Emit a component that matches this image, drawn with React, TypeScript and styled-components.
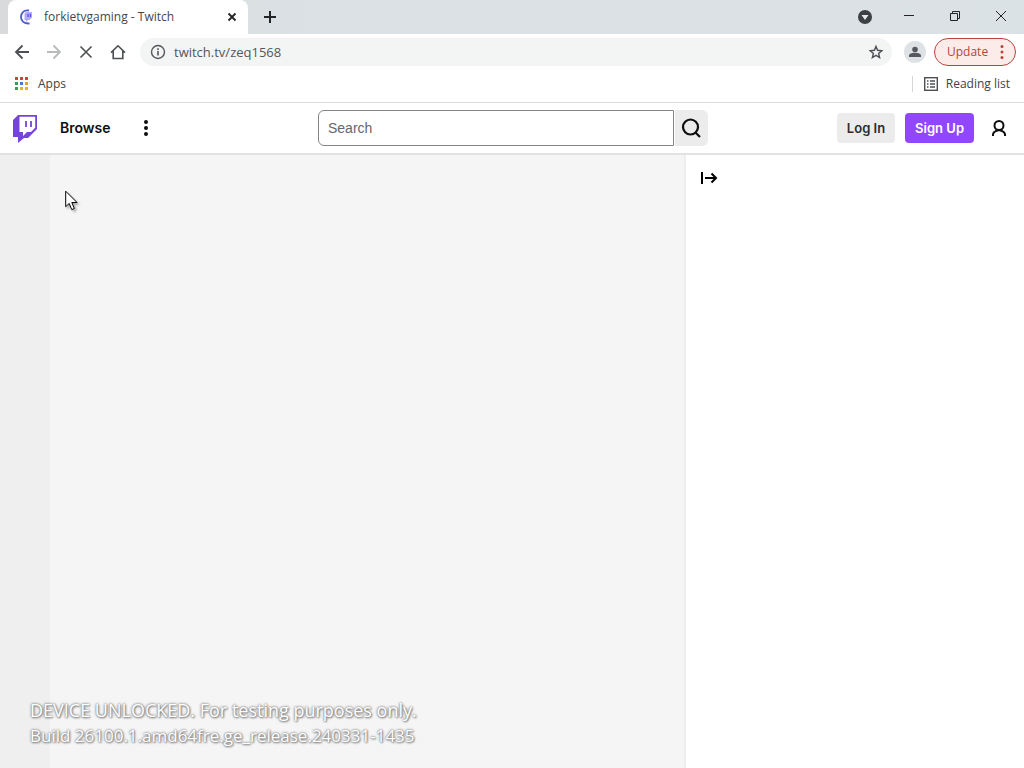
import React from "react";
import styled, { createGlobalStyle } from "styled-components";

const Global = createGlobalStyle`
  * { box-sizing: border-box; }
  body { margin: 0; background: #ffffff; }
  button, input { font: inherit; }
`;

const ui = `"Open Sans", "Noto Sans", sans-serif`;
const sans = `Inter, "Liberation Sans", sans-serif`;

const Screen = styled.div`
  position: relative;
  display: flex;
  flex-direction: column;
  min-height: 100vh;
`;

const IconButton = styled.button<{ $w?: number; $h?: number }>`
  display: flex;
  align-items: center;
  justify-content: center;
  flex: none;
  width: ${(p) => p.$w ?? 32}px;
  height: ${(p) => p.$h ?? 28}px;
  padding: 0;
  border: 0;
  background: transparent;
  color: inherit;
`;

const TabStrip = styled.header`
  display: flex;
  align-items: center;
  height: 34px;
  padding-left: 8px;
  background: linear-gradient(90deg, #d8dadb, #dbe1e4 30%, #dbe2e5);
  color: #222426;
  font-family: ${ui};
`;

const Tab = styled.div`
  display: flex;
  align-items: center;
  width: 240px;
  height: 34px;
  padding: 0 8px 0 10px;
  border-radius: 8px 8px 0 0;
  background: #ffffff;
`;

const TabTitle = styled.span`
  flex: 1;
  padding-left: 8px;
  font-size: 12px;
  line-height: 16px;
  white-space: nowrap;
  color: #45484c;
`;

const WindowControls = styled.div`
  display: flex;
  align-items: center;
  margin-left: auto;
`;

const Toolbar = styled.div`
  display: flex;
  align-items: center;
  height: 36px;
  padding: 0 8px 0 6px;
  background: #ffffff;
  color: #4c4f53;
  font-family: ${ui};
`;

const AddressBar = styled.form`
  display: flex;
  flex: 1;
  align-items: center;
  height: 28px;
  margin: 0 12px 0 6px;
  padding-left: 10px;
  border-radius: 14px;
  background: #f3f4f4;
`;

const AddressInput = styled.input`
  flex: 1;
  min-width: 0;
  padding: 0 8px;
  border: 0;
  outline: 0;
  background: transparent;
  color: #54575b;
  font-size: 13px;
  line-height: 20px;
`;

const Avatar = styled.button`
  display: flex;
  align-items: center;
  justify-content: center;
  width: 22px;
  height: 22px;
  margin-right: 8px;
  padding: 0;
  border: 0;
  border-radius: 50%;
  background: #dfe2e5;
`;

const UpdateButton = styled.button`
  display: flex;
  align-items: center;
  justify-content: space-between;
  width: 82px;
  height: 28px;
  padding: 0 11px 0 12px;
  border: 1px solid #b9433c;
  border-radius: 14px;
  background: #fbebe9;
  color: #b9433c;
  font-size: 12px;
  line-height: 16px;
`;

const Bookmarks = styled.nav`
  display: flex;
  align-items: center;
  justify-content: space-between;
  height: 33px;
  padding: 0 14px 4px;
  border-bottom: 1px solid #d9dbdd;
  background: #ffffff;
  color: #404347;
  font-family: ${ui};
`;

const Bookmark = styled.a<{ $divided?: boolean }>`
  display: flex;
  align-items: center;
  gap: ${(p) => (p.$divided ? 8 : 9)}px;
  height: 16px;
  padding-left: ${(p) => (p.$divided ? 11 : 0)}px;
  border-left: ${(p) => (p.$divided ? "1px solid #d5d7d9" : "0")};
  color: inherit;
  font-size: 12px;
  line-height: 16px;
  text-decoration: none;
`;

const SiteNav = styled.nav`
  display: grid;
  grid-template-columns: 1fr 390px 1fr;
  align-items: center;
  height: 52px;
  padding: 0 10px 0 12px;
  border-bottom: 2px solid #e2e2e3;
  background: #ffffff;
  color: #0e0e10;
  font-family: ${sans};
`;

const NavGroup = styled.div<{ $end?: boolean }>`
  display: flex;
  align-items: center;
  justify-content: ${(p) => (p.$end ? "flex-end" : "flex-start")};
  gap: ${(p) => (p.$end ? 10 : 22)}px;
`;

const BrowseLink = styled.a`
  color: inherit;
  font-size: 14px;
  font-weight: 600;
  line-height: 20px;
  text-decoration: none;
`;

const SearchForm = styled.form`
  display: flex;
  gap: 1px;
  height: 36px;
`;

const SearchInput = styled.input`
  flex: 1;
  min-width: 0;
  padding: 0 9px;
  border: 1px solid #848487;
  border-radius: 6px 0 0 6px;
  outline: 0;
  background: #ffffff;
  font-family: "Liberation Sans", Arial, sans-serif;
  font-size: 14px;
  &::placeholder { color: #66666b; opacity: 1; }
`;

const SearchButton = styled(IconButton)`
  padding-right: 2px;
  border-radius: 0 6px 6px 0;
  background: #ececed;
`;

const AccountButton = styled.button<{ $primary?: boolean }>`
  height: 30px;
  padding: 0 10px;
  border: 0;
  border-radius: 4px;
  background: ${(p) => (p.$primary ? "#9147ff" : "#ececed")};
  color: ${(p) => (p.$primary ? "#ffffff" : "#2c2c30")};
  font-size: 13px;
  font-weight: 600;
  white-space: nowrap;
`;

const Body = styled.div`
  display: flex;
  flex: 1;
`;

const SideNav = styled.aside`
  width: 50px;
  background: #efefef;
`;

const Player = styled.main`
  flex: 1;
  background: #f5f5f5;
`;

const Chat = styled.aside`
  width: 340px;
  padding: 9px 7px;
  border-left: 2px solid #eeeeee;
  background: #ffffff;
`;

const Watermark = styled.div`
  position: absolute;
  left: 30px;
  bottom: 19px;
  color: #ffffff;
  font-family: ${ui};
  line-height: 26px;
  white-space: nowrap;
  text-shadow: 0 0 2px #777777, 0 0 3px #999999, 1px 1px 2px #888888;
`;

const WatermarkLine = styled.p<{ $size: number }>`
  margin: 0;
  font-size: ${(p) => p.$size}px;
`;

const Cursor = styled.svg`
  position: absolute;
  left: 65px;
  top: 190px;
  filter: drop-shadow(2px 2px 1px rgba(0, 0, 0, 0.3));
`;

const appColors = ["#d04437", "#d04437", "#d04437", "#3c9a55", "#4678d8", "#e0a52c", "#3c9a55", "#e0b52c", "#e0b52c"];

const Stroke = ({ d, size = 16, width = 2, color = "currentColor" }: { d: string; size?: number; width?: number; color?: string }) => (
  <svg width={size} height={size} viewBox={`0 0 ${size} ${size}`} fill="none" stroke={color} strokeWidth={width} aria-hidden="true">
    <path d={d} />
  </svg>
);

const Dots = ({ height = 16, r = 2 }: { height?: number; r?: number }) => (
  <svg width="4" height={height} viewBox={`0 0 4 ${height}`} fill="currentColor" aria-hidden="true">
    <circle cx="2" cy={r} r={r} />
    <circle cx="2" cy={height / 2} r={r} />
    <circle cx="2" cy={height - r} r={r} />
  </svg>
);

export default function App() {
  return (
    <Screen>
      <Global />
      <TabStrip>
        <Tab>
          <svg width="18" height="16" viewBox="0 0 18 16" fill="none" aria-hidden="true">
            <path d="M11 1.5C6 .5 3 4 3 8s3 6.800 8.500 6.500" stroke="#4a5cc0" strokeWidth="1.8" />
            <path d="M6.500 4.500L8 3h6v5.500L11.500 11H10l-2 2v-2H6.500z" fill="#b0aafa" />
            <path d="M10 5v3M12.400 5v3" stroke="#5b4be0" strokeWidth="1.2" />
          </svg>
          <TabTitle>forkietvgaming - Twitch</TabTitle>
          <IconButton $w={16} $h={16} aria-label="Close tab"><Stroke size={10} width={1.8} d="M1.5 1.5l7 7M8.5 1.5l-7 7" /></IconButton>
        </Tab>
        <IconButton $w={44} aria-label="New tab"><Stroke size={14} d="M7 1v12M1 7h12" /></IconButton>
        <WindowControls>
          <IconButton $w={42} aria-label="Search tabs">
            <svg width="14" height="14" viewBox="0 0 14 14"><circle cx="7" cy="7" r="7" fill="#3c4043" /><path d="M3.5 5h7L7 10z" fill="#e4e9ec" /></svg>
          </IconButton>
          <IconButton $w={46} aria-label="Minimize"><Stroke size={12} width={1} d="M1 4.5h10" /></IconButton>
          <IconButton $w={46} aria-label="Restore"><Stroke size={12} width={1} d="M1.5 2.5h7v7h-7zM3.5 2.5v-2h7v7h-2" /></IconButton>
          <IconButton $w={46} aria-label="Close"><Stroke size={12} width={1} d="M1 0l10 10M11 0L1 10" /></IconButton>
        </WindowControls>
      </TabStrip>

      <Toolbar>
        <IconButton aria-label="Back"><Stroke width={1.8} d="M15 8H2M8.5 1.5L2 8l6.5 6.5" /></IconButton>
        <IconButton aria-label="Forward"><Stroke width={1.8} color="#b9bbbd" d="M1 8h13M7.5 1.5L14 8l-6.500 6.500" /></IconButton>
        <IconButton aria-label="Stop"><Stroke width={1.6} d="M2.5 2.5l11 11M13.5 2.5l-11 11" /></IconButton>
        <IconButton aria-label="Home"><Stroke width={1.6} d="M1 8.6L8 1.8l7 6.800M3.200 7v7.500h9.600V7" /></IconButton>
        <AddressBar>
          <svg width="16" height="16" viewBox="0 0 16 16" fill="none" stroke="#54575b" aria-hidden="true">
            <circle cx="8" cy="8" r="6.5" strokeWidth="1.4" />
            <path d="M8 7v4.500M8 4.300v1.600" strokeWidth="1.6" />
          </svg>
          <AddressInput aria-label="Address" defaultValue="twitch.tv/zeq1568" />
          <IconButton type="button" aria-label="Bookmark this page">
            <Stroke width={1.4} d="M8 2.400l1.600 3.900 4.200.400-3.200 2.800 1 4.100L8 11.400l-3.600 2.200 1-4.100L2.200 6.700l4.200-.400z" />
          </IconButton>
        </AddressBar>
        <Avatar aria-label="Profile">
          <svg width="12" height="12" viewBox="0 0 12 12" fill="#55585c"><circle cx="6" cy="3.5" r="2.8" /><path d="M0 11V9.500c0-2 3.500-2.800 6-2.800s6 .800 6 2.800V11z" /></svg>
        </Avatar>
        <UpdateButton>Update<Dots height={14} r={1.5} /></UpdateButton>
      </Toolbar>

      <Bookmarks aria-label="Bookmarks">
        <Bookmark href="#apps">
          <svg width="15" height="14" viewBox="0 0 15 14" aria-hidden="true">
            {appColors.map((c, i) => <rect key={i} x={1 + (i % 3) * 5} y={Math.floor(i / 3) * 5} width="3" height="3" fill={c} />)}
          </svg>
          Apps
        </Bookmark>
        <Bookmark href="#reading" $divided>
          <svg width="14" height="14" viewBox="0 0 14 14" fill="none" stroke="#4c4f53" aria-hidden="true">
            <rect x="0.7" y="0.7" width="12.6" height="12.6" strokeWidth="1.4" />
            <path d="M3 4h1.500M3 7h1.500M3 10h1.500M6 4h5M6 7h5M6 10h5" strokeWidth="1.4" />
          </svg>
          Reading list
        </Bookmark>
      </Bookmarks>

      <SiteNav>
        <NavGroup>
          <svg width="26" height="30" viewBox="0 0 26 30" role="img" aria-label="Twitch">
            <path d="M6 2L1 7v17h5v6l6-5h4l9-9V2z" fill="#7444dc" />
            <path d="M7.500 3.800h15.700v11L19 19h-4l-4 4v-4H7.500z" fill="#ffffff" />
            <path d="M14 8v6M19 8v6" stroke="#7444dc" strokeWidth="1.8" />
          </svg>
          <BrowseLink href="#browse">Browse</BrowseLink>
          <IconButton $w={26} aria-label="More"><Dots height={16} /></IconButton>
        </NavGroup>
        <SearchForm>
          <SearchInput aria-label="Search" placeholder="Search" />
          <SearchButton type="button" $w={33} $h={36} aria-label="Run search">
            <svg width="20" height="20" viewBox="0 0 20 20" fill="none" stroke="#0e0e10" strokeWidth="2.2"><circle cx="9.5" cy="9" r="7.5" /><path d="M14.500 14.500l4.500 4.500" /></svg>
          </SearchButton>
        </SearchForm>
        <NavGroup $end>
          <AccountButton>Log In</AccountButton>
          <AccountButton $primary>Sign Up</AccountButton>
          <IconButton $w={30} $h={30} aria-label="Account">
            <svg width="16" height="18" viewBox="0 0 16 18" fill="none" stroke="currentColor" strokeWidth="2"><circle cx="8" cy="6.5" r="4.5" /><path d="M2 17v-1.500c0-2.500 2-3.500 6-4.500 4 1 6 2 6 4.500V17" /></svg>
          </IconButton>
        </NavGroup>
      </SiteNav>

      <Body>
        <SideNav />
        <Player />
        <Chat>
          <IconButton aria-label="Collapse chat"><Stroke size={18} d="M2 3v12M5 9h11M11.5 4.5L16 9l-4.500 4.500" /></IconButton>
        </Chat>
      </Body>

      <Watermark>
        <WatermarkLine $size={18}>DEVICE UNLOCKED. For testing purposes only.</WatermarkLine>
        <WatermarkLine $size={17}>Build 26100.1.amd64fre.ge_release.240331-1435</WatermarkLine>
      </Watermark>
      <Cursor width="13" height="21" viewBox="0 0 13 21" fill="#ffffff" stroke="#000000" aria-hidden="true">
        <path d="M.7 1.200v15.500l3.500-3.300 2.500 6.200 2.600-1.100-2.500-6H12z" />
      </Cursor>
    </Screen>
  );
}
